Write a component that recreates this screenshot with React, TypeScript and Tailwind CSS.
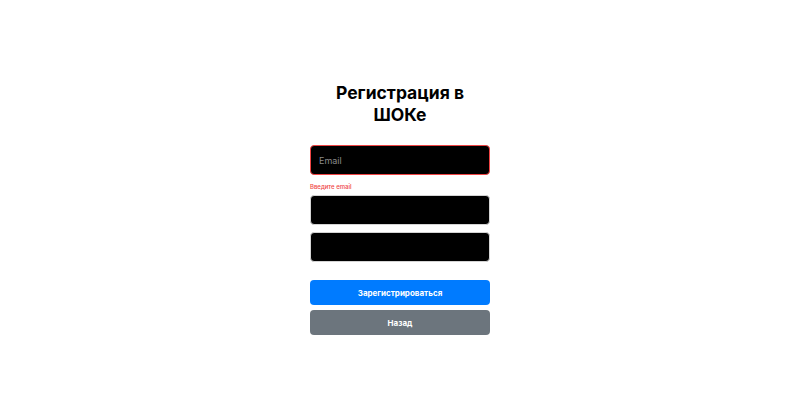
export default function App() {
  return (
    <div className="flex h-[408px] w-full justify-center bg-white pt-[82px] font-['Inter',sans-serif]">
      <div className="flex w-[180px] flex-col">
        <h1 className="mx-auto w-[150px] text-center text-[17.5px] font-bold leading-[22px] text-black">
          Регистрация в ШОКе
        </h1>

        <input
          type="email"
          placeholder="Email"
          className="mt-[19px] h-[30px] w-full rounded-[4px] border border-[#ef4444] bg-black px-[8px] text-[9px] text-white outline-none placeholder:text-[#8a8a8a]"
        />
        <span className="mt-[8px] text-[6px] font-medium leading-[8px] text-[#ef4444]">Введите email</span>

        <input
          type="password"
          className="mt-[4px] h-[30px] w-full rounded-[4px] border border-[#d4d4d4] bg-black px-[8px] text-[9px] text-white outline-none"
        />
        <input
          type="password"
          className="mt-[7px] h-[30px] w-full rounded-[4px] border border-[#d4d4d4] bg-black px-[8px] text-[9px] text-white outline-none"
        />

        <button className="mt-[18px] h-[25px] w-full rounded-[4px] bg-[#007bff] text-[8px] font-bold text-white">
          Зарегистрироваться
        </button>
        <button className="mt-[5px] h-[25px] w-full rounded-[4px] bg-[#6c757d] text-[8px] font-bold text-white">
          Назад
        </button>
      </div>
    </div>
  );
}
